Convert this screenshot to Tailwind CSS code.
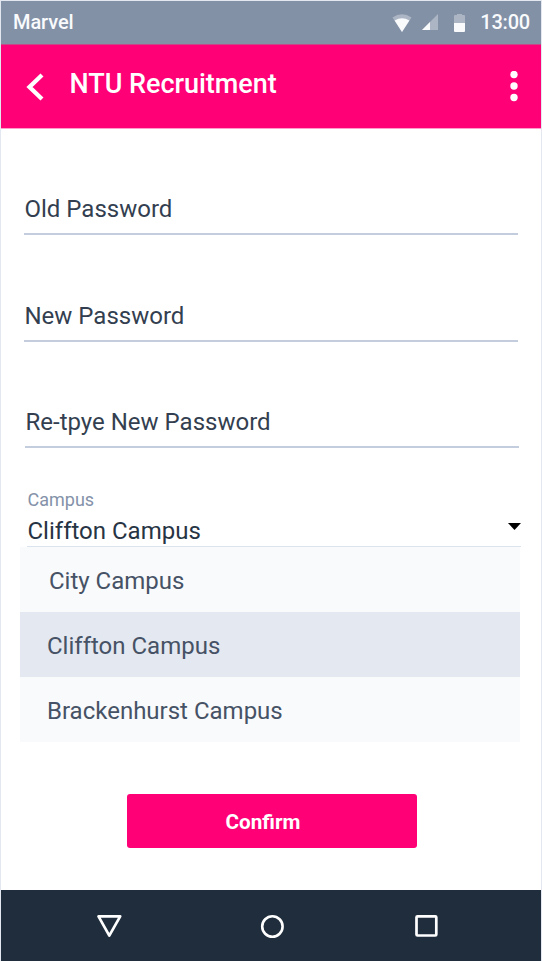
<!DOCTYPE html>
<html lang="en">
<head>
<meta charset="utf-8">
<title>NTU Recruitment</title>
<script src="https://cdn.jsdelivr.net/npm/@tailwindcss/browser@4"></script>
</head>
<body class="bg-white font-[Roboto,sans-serif]">
<div class="flex h-[961px] w-[542px] flex-col overflow-hidden border-x border-t border-[#e2e7f0] bg-white">
  <div class="flex h-[43px] shrink-0 items-center bg-[#8391a7] pl-3 pr-[11px] text-xl font-medium text-[#f8fafc]">
    <span class="flex-1 pb-px tracking-[-0.1px]">Marvel</span>
    <svg class="mr-[10px] h-[18px] w-5" viewBox="0 0 20 18"><path d="M0.5 3.5Q10-3 19.5 3.5L10 18Z" fill="#abb5c4"/><path d="M2.6 6.5Q10 2 17.4 6.5L10 18Z" fill="#f8fafc"/></svg>
    <svg class="mr-4 mb-px h-4 w-4" viewBox="0 0 16 16"><path d="M16 0V16H0Z" fill="#abb5c4"/><path d="M8 8V16H0Z" fill="#f8fafc"/></svg>
    <svg class="mr-[15px] h-[18px] w-[11px]" viewBox="0 0 11 18"><path d="M3 0H8V1H10Q11 1 11 2V9H0V2Q0 1 1 1H3Z" fill="#abb5c4"/><path d="M0 9H11V17Q11 18 10 18H1Q0 18 0 17Z" fill="#f8fafc"/></svg>
    <span class="pb-px tracking-[-0.2px]">13:00</span>
  </div>
  <header class="flex h-[84px] shrink-0 items-center border-t border-[#c74886] bg-[#ff0077] pl-[25px] pr-[23px] text-white">
    <svg class="mr-[25.5px] h-7 w-[18px]" viewBox="0 0 18 28" fill="none" stroke="currentColor" stroke-width="4.3"><path d="M16 2L3.5 14L16 26"/></svg>
    <h1 class="flex-1 pb-[5px] text-[27px] font-medium leading-8 tracking-[-0.03px]">NTU Recruitment</h1>
    <svg class="h-[31px] w-2" viewBox="0 0 8 31" fill="currentColor"><circle cx="4" cy="3.5" r="3.7"/><circle cx="4" cy="15" r="3.7"/><circle cx="4" cy="26.5" r="3.7"/></svg>
  </header>
  <main class="flex-1 border-t border-[#ff9ccb] text-2xl text-[#333f50]">
    <div class="ml-[23px] mt-[64px] h-[42px] w-[494px] border-b-2 border-[#c3cddd] pl-[0.5px] leading-8">Old Password</div>
    <div class="ml-[23px] mt-[65px] h-[42px] w-[494px] border-b-2 border-[#c3cddd] pl-[0.5px] leading-8">New Password</div>
    <div class="ml-6 mt-[64px] h-[42px] w-[494px] border-b-2 border-[#c3cddd] pl-[0.5px] leading-8">Re-tpye New Password</div>
    <div class="ml-[26px] mt-10 h-[59px] w-[494px] border-b border-[#dbe3ee]">
      <div class="pl-[0.5px] text-lg leading-6 text-[#8492a9]">Campus</div>
      <div class="flex h-[34px] items-center justify-between text-[#273444]"><span class="pl-[0.5px] pt-1">Cliffton Campus</span><svg class="-mt-1.5 h-[7px] w-[13px]" viewBox="0 0 13 7"><path d="M0 0H13L6.5 7Z" fill="#000"/></svg></div>
    </div>
    <ul class="ml-[19px] w-[500px] text-[#465265]">
      <li class="flex h-[65px] items-center bg-[#f9fafc] pl-[29px] pt-[3px]">City Campus</li>
      <li class="flex h-[65px] items-center bg-[#e4e8f1] pl-[27px] pt-[3px]">Cliffton Campus</li>
      <li class="flex h-[65px] items-center bg-[#f9fafc] pl-[27px] pt-[3px]">Brackenhurst Campus</li>
    </ul>
    <button class="ml-[126px] mt-[52px] block h-[54px] w-[290px] rounded-[3px] bg-[#ff0077] pr-[18px] pt-[3px] text-[20.7px] font-bold text-white">Confirm</button>
  </main>
  <nav class="flex h-[71px] shrink-0 bg-[#1f2d3d] pl-[95px] pt-[24px]">
    <svg class="mr-[137px] h-6 w-[27px]" viewBox="0 0 27 24" fill="none" stroke="#fff" stroke-width="2.7" stroke-linejoin="round"><path d="M2.5 2.4H24.2L13.3 21.6Z"/></svg>
    <svg class="mr-[130px] h-6 w-6" viewBox="0 0 24 24" fill="none" stroke="#fff" stroke-width="2.6"><circle cx="12.4" cy="12.5" r="10.2"/></svg>
    <svg class="h-6 w-6" viewBox="0 0 24 24" fill="none" stroke="#fff" stroke-width="2.7"><rect x="2.5" y="2.3" width="19.8" height="19.2" rx="1"/></svg>
  </nav>
</div>
</body>
</html>
